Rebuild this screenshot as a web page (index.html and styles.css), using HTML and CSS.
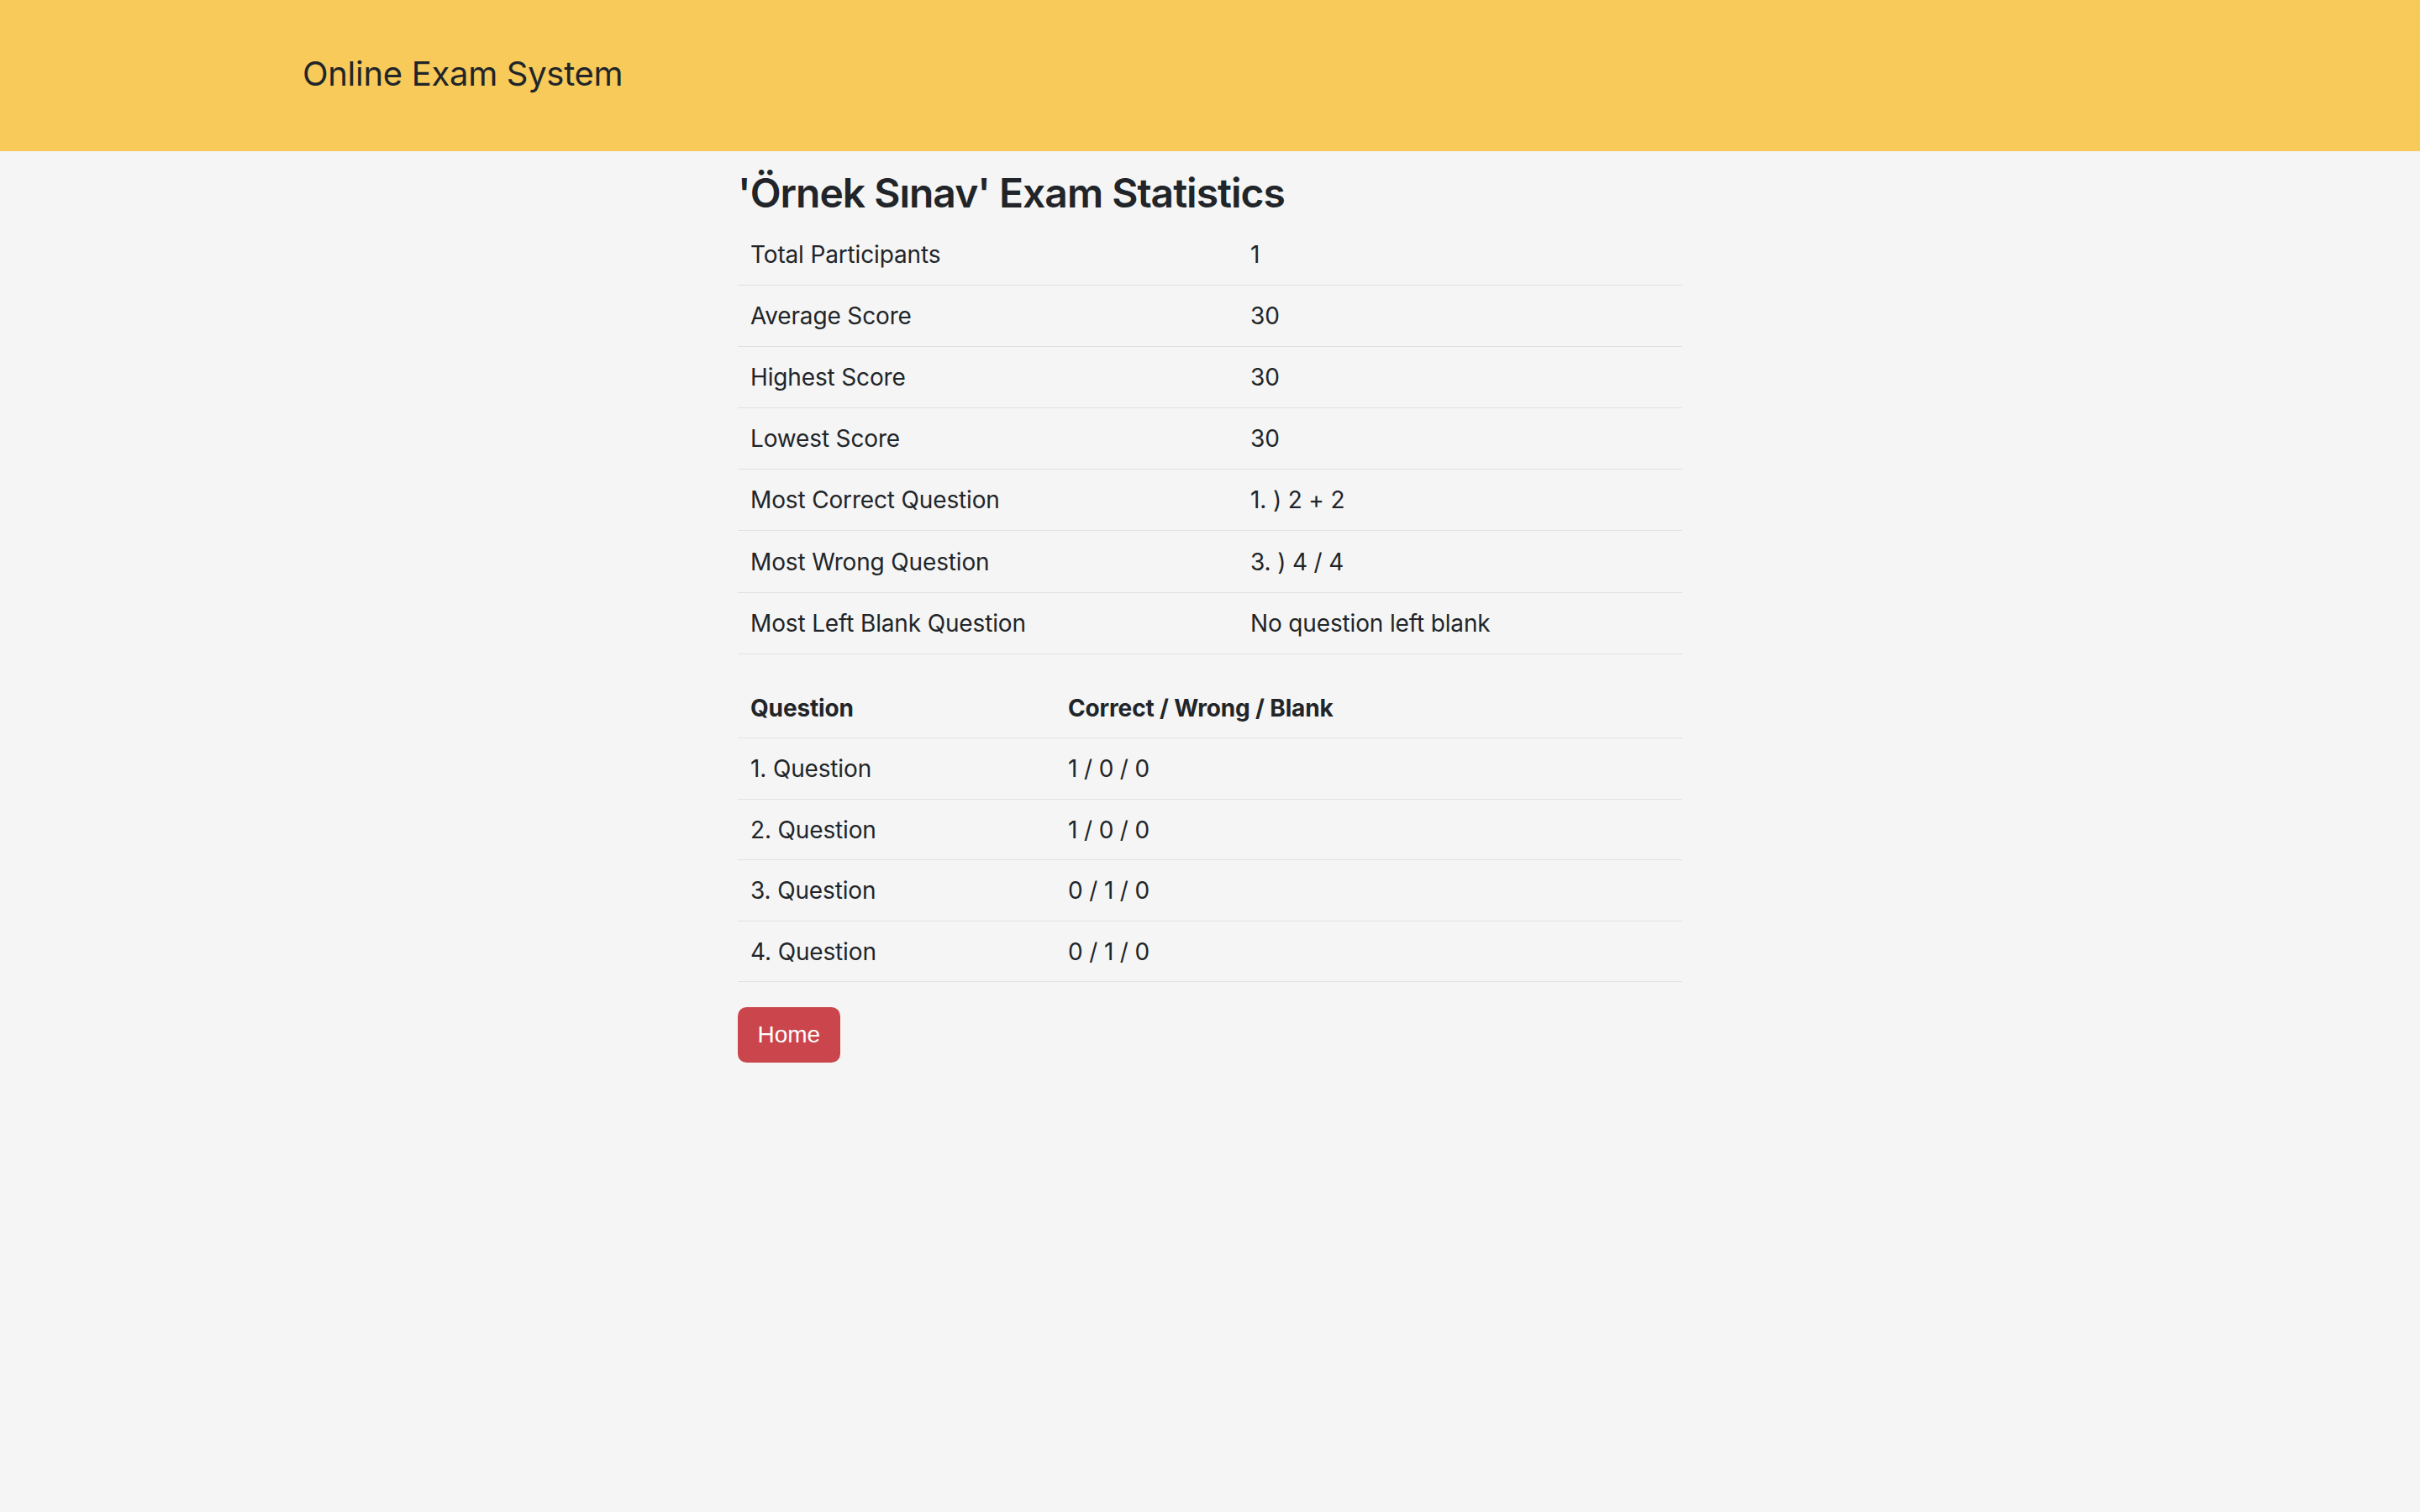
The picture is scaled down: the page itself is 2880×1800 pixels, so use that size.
FILE: index.html
```html
<!DOCTYPE html>
<html lang="en">
<head>
<meta charset="utf-8">
<title>Online Exam System</title>
<link rel="stylesheet" href="styles.css">
</head>
<body>
<nav class="navbar">
  <a class="brand" href="#">Online Exam System</a>
</nav>
<main class="main">
  <h3 class="title">'Örnek Sınav' Exam Statistics</h3>
  <table class="table stats">
    <tbody>
      <tr><td class="c1">Total Participants</td><td>1</td></tr>
      <tr><td class="c1">Average Score</td><td>30</td></tr>
      <tr><td class="c1">Highest Score</td><td>30</td></tr>
      <tr><td class="c1">Lowest Score</td><td>30</td></tr>
      <tr><td class="c1">Most Correct Question</td><td>1. ) 2 + 2</td></tr>
      <tr><td class="c1">Most Wrong Question</td><td>3. ) 4 / 4</td></tr>
      <tr><td class="c1">Most Left Blank Question</td><td>No question left blank</td></tr>
    </tbody>
  </table>
  <table class="table questions">
    <thead>
      <tr><th class="c1">Question</th><th>Correct / Wrong / Blank</th></tr>
    </thead>
    <tbody>
      <tr><td class="c1">1. Question</td><td>1 / 0 / 0</td></tr>
      <tr><td class="c1">2. Question</td><td>1 / 0 / 0</td></tr>
      <tr><td class="c1">3. Question</td><td>0 / 1 / 0</td></tr>
      <tr><td class="c1">4. Question</td><td>0 / 1 / 0</td></tr>
    </tbody>
  </table>
  <a class="btn-home" href="#">Home</a>
</main>
</body>
</html>
```
FILE: styles.css
```css
* { box-sizing: border-box; }

html, body {
  margin: 0;
  padding: 0;
}

body {
  background: #f5f5f5;
  color: #212529;
  font-family: Inter, "Noto Sans", "DejaVu Sans", sans-serif;
  font-size: 28px;
  line-height: 42px;
  letter-spacing: -0.15px;
  min-height: 1800px;
}

.navbar {
  height: 180px;
  background: #f7ca5a;
  display: flex;
  align-items: center;
  padding: 0 360px 5px;
}

.brand {
  color: #212529;
  text-decoration: none;
  font-size: 40px;
  line-height: 60px;
  font-weight: 400;
  letter-spacing: -0.3px;
}

.main {
  width: 1124px;
  margin-left: 878px;
  padding-top: 21px;
}

.title {
  margin: 0 0 7.5px;
  font-size: 48px;
  line-height: 58px;
  font-weight: 600;
  letter-spacing: -1px;
}

.table {
  width: 100%;
  border-collapse: collapse;
}

.table td,
.table th {
  padding: 15.1px 15px;
  text-align: left;
  vertical-align: top;
  border-bottom: 1px solid #dee2e6;
}

.table th {
  font-weight: 700;
}

.stats {
  margin-bottom: 28px;
}

.stats .c1 { width: 595px; }

.questions {
  margin-bottom: 30px;
}

.questions td,
.questions th {
  padding-top: 14.75px;
  padding-bottom: 14.75px;
}

.questions .c1 { width: 378px; }

.btn-home {
  display: inline-block;
  background: #cb454c;
  border: 2px solid #cb454c;
  border-radius: 10.5px;
  color: #ffffff;
  text-decoration: none;
  font-family: "Liberation Sans", Arial, sans-serif;
  font-size: 28px;
  line-height: 42px;
  letter-spacing: 0;
  padding: 10px 21.5px;
}
```
